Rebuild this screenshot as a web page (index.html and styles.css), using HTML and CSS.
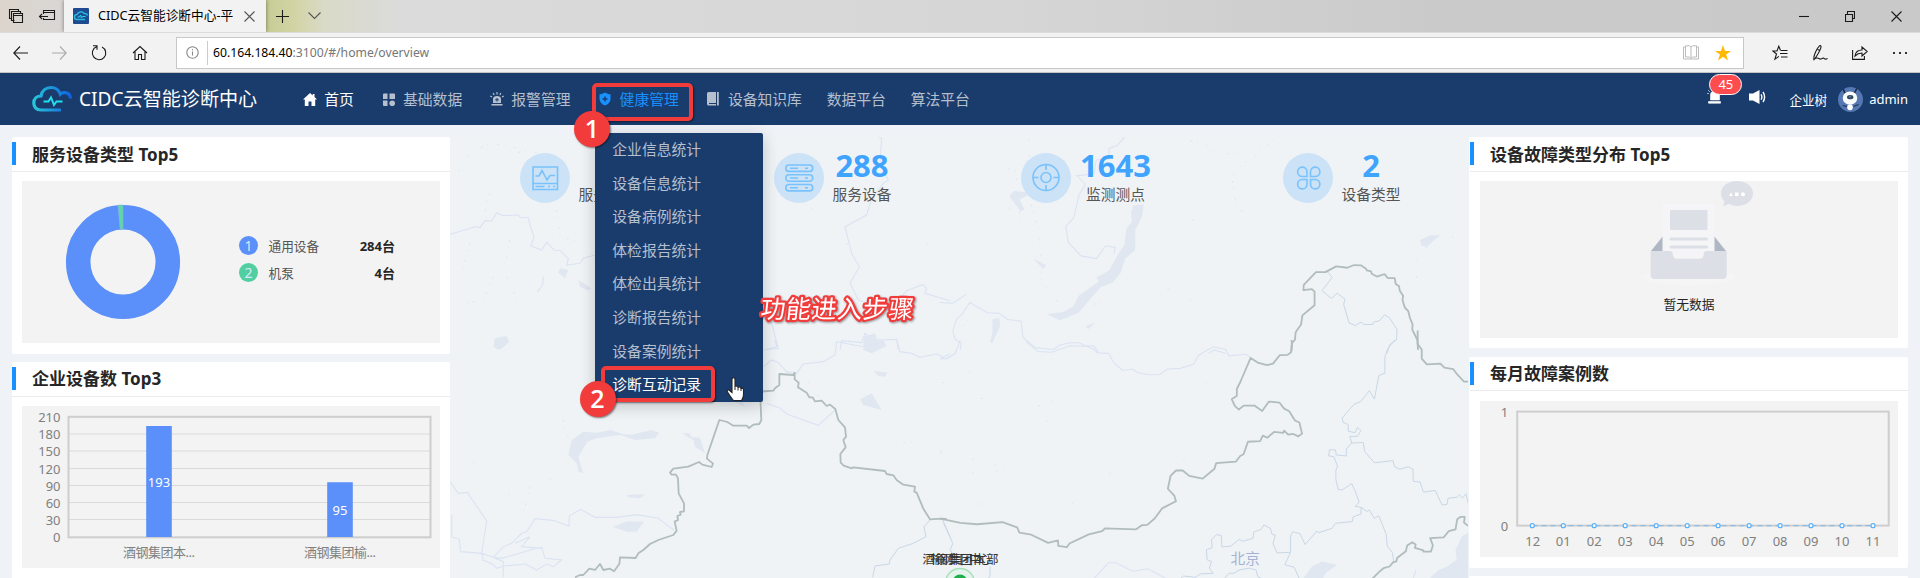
FILE: index.html
```html
<!DOCTYPE html>
<html lang="zh-CN">
<head>
<meta charset="utf-8">
<title>CIDC云智能诊断中心-平台</title>
<link rel="stylesheet" href="styles.css">
</head>
<body>
<header class="tabstrip">
  <div class="tab-tools">
    <svg width="16" height="16" viewBox="0 0 16 16" class="ln"><path d="M3.500 10.500h-2v-9h9v2M6.500 12.500h-3v-9h9v2M5.500 5.500h9v9h-9zM5.500 7.500h9"/></svg>
    <svg width="18" height="16" viewBox="0 0 18 16" class="ln"><path d="M5.500 6V2.500h11v9h-11V10M5.500 4.500h11M10 8.500H1.500M4 6L1.500 8.500 4 11"/></svg>
  </div>
  <div class="tab">
    <svg class="favicon" width="16" height="16" viewBox="0 0 16 16"><rect width="16" height="16" rx="1" fill="#1e4a90"/><path d="M12 11.500H4a2.500 2.500 0 0 1 0-5 4 4 0 0 1 7-1q3-.5 3.500 2" fill="none" stroke="#25b8dc" stroke-width="1.500"/><path d="M4.500 9h2l1-2 1 3 1-1.500h3" fill="none" stroke="#25e0e8"/></svg>
    <span class="tab-title">CIDC云智能诊断中心-平</span>
    <svg width="11" height="11" viewBox="0 0 11 11" class="ln thin"><path d="M.5.5l10 10M10.500.5l-10 10"/></svg>
  </div>
  <div class="tab-new">
    <svg width="13" height="13" viewBox="0 0 13 13" class="ln"><path d="M6.500 0v13M0 6.500h13"/></svg>
    <svg width="13" height="8" viewBox="0 0 13 8" class="ln thin"><path d="M.5.5l6 6 6-6"/></svg>
  </div>
  <div class="window-buttons">
    <svg width="10" height="11" viewBox="0 0 10 11" class="ln"><path d="M0 5.500h10"/></svg>
    <svg width="10" height="11" viewBox="0 0 10 11" class="ln"><path d="M.5 3.500h7v7h-7zM2.500 3V.5h7v7H8"/></svg>
    <svg width="11" height="11" viewBox="0 0 11 11" class="ln"><path d="M.5.5l10 10M10.500.5l-10 10"/></svg>
  </div>
</header>

<div class="addressbar">
  <div class="nav-buttons">
    <svg width="15" height="14" viewBox="0 0 15 14" class="ln"><path d="M15 7H.8M7 .5L.8 7 7 13.500"/></svg>
    <svg width="15" height="14" viewBox="0 0 15 14" class="ln faded"><path d="M0 7h14.200M8 .5L14.200 7 8 13.500"/></svg>
    <svg width="16" height="16" viewBox="0 0 16 16" class="ln"><path d="M5.500 1.800a6.700 6.700 0 1 0 5.500.2M2 .8h4v4"/></svg>
    <svg width="16" height="16" viewBox="0 0 16 16" class="ln"><path d="M1 8l7-6.500L15 8M3 6.500v8h3.500v-5h3v5H13v-8"/></svg>
  </div>
  <div class="urlbox">
    <svg width="13" height="13" viewBox="0 0 13 13" class="ln grey"><circle cx="6.500" cy="6.500" r="5.700"/><path d="M6.500 5.500v4M6.500 3v1.200"/></svg>
    <span class="url"><b>60.164.184.40</b>:3100/#/home/overview</span>
    <svg class="reader" width="16" height="15" viewBox="0 0 16 15"><path d="M2.500 2H.5v12h15V2h-2M2.500.8h4L8 2l1.500-1.200h4V12h-4L8 13.500 6.500 12h-4zM8 2v11" fill="none" stroke="#bbb"/></svg>
    <svg width="16" height="16" viewBox="0 0 16 16"><path d="M8 0l2 5.900h6l-4.900 3.600L13 15.500l-5-3.700-5 3.700 1.900-6L0 5.900h6z" fill="#ffb900"/></svg>
  </div>
  <div class="tool-buttons">
    <svg width="16" height="16" viewBox="0 0 16 16" class="ln"><path d="M8.500 5.500L6.800 1.200 5 6H.8l3.700 3-1.600 5.200 4-2.800M9 5.500h6.500M8 8.500h7.500M9 12h6.500"/></svg>
    <svg width="16" height="16" viewBox="0 0 16 16" class="ln"><path d="M2 15C1 11 5 3 7.500.8c3-1 1.500 4-5 13.500M5.500 4.500l2.500 1M1.500 15.300c2-3 4.500-2.500 6-1.500 2 1.300 2.500-1.500 4.500-.5 1 1 2 1.500 3.500 0"/></svg>
    <svg width="16" height="16" viewBox="0 0 16 16" class="ln"><path d="M.6 5v9.400h11.800V11M3 11c.5-4 3.500-6 7-6V2l5.200 4.500L10 11V8C7 8 5 9 3 11z"/></svg>
    <svg width="16" height="4" viewBox="0 0 16 4"><path d="M1 1h2v2H1zM7 1h2v2H7zM13 1h2v2h-2z" fill="#333"/></svg>
  </div>
</div>

<nav class="topnav">
  <div class="brand">
    <svg width="41" height="28" viewBox="0 0 41 28"><defs><linearGradient id="lg"><stop offset="0" stop-color="#28c6d8"/><stop offset="1" stop-color="#1062e0"/></linearGradient></defs><path d="M29 25H9C4 25 1.800 21.500 1.800 18c0-4 3-7 7.200-7 1-5.500 5-8.500 10-8.500 4.500 0 7.800 2.500 9.300 6.500 1-1 2.500-1.600 5-1.400 3.700.3 5 2.500 5.200 5.900" fill="none" stroke="url(#lg)" stroke-width="3.200"/><path d="M11.500 16.500h5l2.500-4 3 7.500 2.500-3.500h6" fill="none" stroke="#22dff0" stroke-width="2"/></svg>
    <span>CIDC云智能诊断中心</span>
  </div>
  <ul class="menu">
    <li class="on"><svg width="14" height="13" viewBox="0 0 14 13"><path d="M7 0L0 6.500h1.800V13h3.700V8.500h3V13h3.700V6.500H14L11.500 4V1H9.700v1.500z" fill="currentColor"/></svg>首页</li>
    <li><svg width="14" height="13" viewBox="0 0 14 13"><path d="M1 1.500q0-1 1-1h3.500v5.500H1zM7.500.5H12q1 0 1 1V6H7.500zM1 7.500h4.500V13H2q-1 0-1-1z" fill="currentColor"/><circle cx="10.200" cy="10.200" r="2.800" fill="currentColor"/></svg>基础数据</li>
    <li><svg width="14" height="14" viewBox="0 0 14 14"><path d="M3 11V7q0-3 4-3t4 3v4zM1.500 12h11v1.500h-11z" fill="currentColor"/><path d="M7 0v2.500M3.200 1l1 2M10.800 1l-1 2M.3 4l1.700 1M13.700 4L12 5" stroke="currentColor" stroke-width="1.200"/><path d="M7 6v3.500M5.200 7.800h3.600" stroke="#1a3c6c"/></svg>报警管理</li>
    <li class="active"><svg width="14" height="14" viewBox="0 0 14 14"><path d="M7 .5c2 1.200 3.500 1.700 5.500 1.800V7c0 3-2.500 5.300-5.500 6.500C4 12.300 1.500 10 1.500 7V2.300C3.500 2.200 5 1.700 7 .5z" fill="currentColor"/><path d="M7 4.500v5M4.500 7h5" stroke="#1a3c6c" stroke-width="1.500"/></svg>健康管理
      <div class="dropdown">
        <a>企业信息统计</a><a>设备信息统计</a><a>设备病例统计</a><a>体检报告统计</a><a>体检出具统计</a><a>诊断报告统计</a><a>设备案例统计</a><a class="on">诊断互动记录</a>
      </div>
    </li>
    <li><svg width="14" height="14" viewBox="0 0 14 14"><path d="M2.500 0H10v11H3v1h7v1.500H2.500Q1 13.500 1 12V1.500Q1 0 2.500 0zM11 0h1.800v13.500H11z" fill="currentColor"/></svg>设备知识库</li>
    <li class="plain">数据平台</li>
    <li class="plain">算法平台</li>
  </ul>
  <div class="user">
    <span class="alarm"><svg width="15" height="16" viewBox="0 0 15 16"><path d="M3.500 12V7q0-4 4.500-4t4.500 4v5zM1.500 13.500h12v1.700h-12zM0 5.500h2M1 2l2 2" fill="#fff" stroke="#fff" stroke-width=".6"/></svg><em>45</em></span>
    <svg class="speaker" width="17" height="14" viewBox="0 0 17 14"><path d="M0 3.500h4L10.500 0v14L4 10.500H0z" fill="#fff"/><path d="M12 4.300q1.800 2.700 0 5.400M14 2q3.200 5 0 10" fill="none" stroke="#fff" stroke-width="1.400"/></svg>
    <span class="tree">企业树</span>
    <svg class="avatar" width="25" height="25" viewBox="0 0 25 25"><circle cx="12.500" cy="12.500" r="12.500" fill="#5577b3"/><path d="M5.500 2.500l1.500 4M18.500 2l-2 4" stroke="#1d2b47" stroke-width="1.600" stroke-linecap="round"/><path d="M4.500 18.500l5 1.200M20.500 17.500l-5 2" stroke="#27375a" stroke-width="1.200"/><ellipse cx="12" cy="11" rx="7.300" ry="6.600" fill="#fafcff"/><ellipse cx="12.200" cy="10.200" rx="3.200" ry="2.100" fill="#34495f"/><circle cx="12" cy="9.800" r=".8" fill="#7d93ad"/><ellipse cx="12" cy="20.300" rx="2.800" ry="3" fill="#fff"/></svg>
    <span class="name">admin</span>
  </div>
</nav>

<main class="dash">
  <section class="col">
    <article class="card c1">
      <h2>服务设备类型 Top5</h2>
      <div class="panel donut-panel">
        <svg width="116" height="116" viewBox="-58 -58 116 116"><circle r="44.800" fill="none" stroke="#5b8ff9" stroke-width="24.500"/><path d="M-5 -56.800A57 57 0 0 1 0 -57V-32.500A32.500 32.500 0 0 0 -2.800 -32.400z" fill="#5ad8a6" stroke="#8fb0ea" stroke-width=".6"/></svg>
        <ul class="legend">
          <li><i class="blue">1</i><span>通用设备</span><b>284台</b></li>
          <li><i class="green">2</i><span>机泵</span><b>4台</b></li>
        </ul>
      </div>
    </article>
    <article class="card c2">
      <h2>企业设备数 Top3</h2>
      <div class="panel">
        <svg class="chart" width="418" height="162" viewBox="22 406 418 162">
          <path d="M68 434h363M68 451h363M68 468.500h363M68 485.500h363M68 502.500h363M68 519.500h363" stroke="#dadada"/>
          <rect x="68.500" y="416.800" width="362" height="120.500" fill="none" stroke="#cecece" stroke-width="2"/>
          <path d="M146.200 426h25.600v111h-25.600zM327.200 482.300h25.600V537h-25.600z" fill="#5b8ff9"/>
          <g text-anchor="end"><text x="60.500" y="422">210</text><text x="60.500" y="439">180</text><text x="60.500" y="456">150</text><text x="60.500" y="473.500">120</text><text x="60.500" y="490.500">90</text><text x="60.500" y="507.500">60</text><text x="60.500" y="524.500">30</text><text x="60.500" y="541.500">0</text></g>
          <g text-anchor="middle"><text x="159" y="486.500" class="w">193</text><text x="340" y="514.500" class="w">95</text><text x="159" y="556.500" textLength="72">酒钢集团本...</text><text x="340" y="556.500" textLength="72">酒钢集团榆...</text></g>
        </svg>
      </div>
    </article>
  </section>

  <section class="map">
    <svg class="mapbg" width="1018" height="441" viewBox="450 137 1018 441">
      <g transform="translate(450 120) scale(.33333)">
        <path class="riv" d="M0 343L45 330 75 320 90 323 105 302 125 303 140 278 160 287 205 285 210 292 235 293 240 315 252 350 243 378 275 390 290 367 312 390 330 392 355 415 350 435 390 430 400 415 435 405M262 515L278 495 280 470M1285 50L1295 55 1290 130 1315 180 1300 190 1265 235 1250 285 1185 320 1205 400 1228 440 1200 490 1225 540 1290 560M1350 535L1370 512 1418 494 1430 505 1425 520 1500 542M940 590L965 610 985 685 940 690M1170 690L1175 662 1235 668 1245 640 1260 650 1285 660 1340 658 1345 690"/>
        <path class="water" d="M330 445L355 450 345 475 325 458zM135 655L170 648 178 665 150 690 130 680zM385 480L425 505 415 512 390 500zM1240 650L1275 640 1285 675 1245 690z"/>
        <path class="dots" d="M25 155L60 100 110 75 165 72 200 85M205 97L245 92 300 115M120 220L105 260 110 300M320 270L330 350 400 370M180 360L160 460M1085 265l5 4M1190 370l4 6M1430 374h5M60 370l-25 90M130 470L100 540 40 550M170 470l40 90"/>
      </g>
      <g transform="translate(450 340) scale(.33333)">
        <path class="riv" d="M0 425L25 460 52 457 110 543 95 640 130 652 160 620 185 610 215 580 230 575 255 536 310 541 357 559 358 528 392 508 435 532 500 532 560 524 625 535 660 562 672 570M5 525L5 590 28 598 32 635 95 640 100 660 130 674 140 685 160 678 230 672M135 655L160 665 160 712M130 652L155 655 250 628 275 622 285 655 335 660 310 680 290 672 260 690 225 672M195 610L240 590 215 620 280 625M950 190L990 205 1010 222 1105 256 1155 210M940 80L965 60 985 68 1010 95 1040 100 1060 72 1120 65 1155 45 1160 5 1240 20M1340 0L1350 35 1385 40 1410 52 1460 42 1480 52 1500 42M975 0L980 20 950 28"/>
        <path class="prov" d="M1440 540L1422 560 1428 590 1390 610 1345 625 1320 660 1318 672 1275 678 1268 712M1478 540L1500 590"/>
        <path class="water" d="M355 345L365 300 400 275 440 278 480 270 520 283 545 284 605 270 628 278 615 295 555 300 510 285 440 295 412 305 385 350 400 400 385 395 380 370zM695 280L718 280 725 292 750 293 765 340 735 320 730 300zM488 560L530 544 582 545 560 575 530 575zM1230 178L1265 160 1295 210 1240 195zM1240 5L1300 0 1310 18 1265 40 1240 30zM1272 92L1312 98 1305 110 1285 108zM530 465L585 463 570 475 535 472zM133 0h24L150 20 140 30zM848 182l25-5 12 24z"/>
        <path class="dots" d="M340 240L345 280 360 300M70 370l10-12M298 420l8-8M240 440l-20 80M1360 310l20-5 28 8M1470 330l12 12M175 460l5 5M1105 170l-40-60"/>
      </g>
      <g transform="translate(940 120) scale(.33806)">
        <path class="riv" d="M548 48L525 75 500 85 500 115 462 118 455 160 405 165 430 190 412 220 395 290 372 315 380 362 417 402 463 410 490 372 518 377 515 395M0 540L38 542 78 515M60 680L62 660 45 650 38 625 48 590 65 575 88 540 140 570 175 572 200 590 240 595 245 640 260 660 290 685 330 687 385 668 435 670 455 678 467 690M795 690L810 680 845 690"/>
        <path class="prov" d="M1147 450L1160 466 1130 505 1158 528 1175 512 1198 530 1194 545 1210 600 1228 608 1245 598 1255 605 1280 605 1282 598 1300 594 1315 576 1330 586 1352 620 1350 650 1330 665 1322 690"/>
        <path class="water" d="M572 252L603 250 598 285 578 325 577 385 548 410 535 450 512 480 475 495 440 535 410 570 355 592 315 574 365 568 395 550 410 520 470 478 462 466 500 445 525 400 545 370 552 320 568 300 565 275zM155 590L175 585 178 610 155 660 148 655 155 630zM220 210L275 215 235 235 250 265 238 270 205 225zM275 410L315 430 305 440zM1420 355L1450 342 1480 340 1440 375 1425 372zM430 610L458 600 440 618z"/>
        <path class="dots" d="M262 55L268 100 248 130M200 145L228 150 225 180M220 210L205 270 172 262M235 270L238 310M270 250L290 320 300 410 300 480 350 540M740 62L785 70 805 100M850 100L880 95M906 122L885 145 860 170M932 108L995 50M865 180L880 270 900 268M745 295h6M740 532l2 4M672 500h10M1440 375L1400 430 1412 470M1515 345l4 2M455 545l25-5M85 590l-30 40"/>
      </g>
      <g transform="translate(940 340) scale(.33806)">
        <path class="riv" d="M60 0L45 40 20 55 0 55M255 0L280 22 335 28 355 15 385 8 412 8 430 18 455 17 470 38 500 40 512 65 540 90 570 86 585 97 620 103 650 102 672 86 710 84 750 72 765 45 808 20 845 28 855 47 905 42 919 53M450 712L498 659 520 659 570 684 615 677 680 712M1398 712l10-32"/>
        <path class="prov" d="M1345 0L1325 25 1316 50 1316 98 1298 105 1285 175 1270 150 1245 182 1225 190 1190 230 1192 243 1207 250 1208 270 1228 274 1235 258 1245 268 1235 285 1212 285 1218 305 1252 303 1256 330 1285 363 1340 357 1345 375 1360 382 1385 375 1399 382 1400 418 1420 420 1430 450 1465 445 1485 488 1500 486 1503 468 1530 465 1537 458 1545 468 1556 455 1562 482M1218 305L1202 322 1202 343 1172 340 1170 325 1152 325 1150 343 1165 345 1176 373 1171 385 1171 412 1178 443 1190 443 1218 425 1228 447 1240 480 1228 492 1246 495 1262 507 1270 503 1285 528 1298 520 1320 575 1323 610 1338 628 1342 655M1246 495L1245 515 1222 523 1220 537 1170 542 1160 557 1120 570 1115 565 1080 605 1065 573 1043 567 1037 580 1037 628 997 630 985 602 992 577 982 575 978 558 958 547 950 560 928 568 926 587 895 595 885 590 860 610 834 612 832 578 818 576 803 590 805 615 788 620 790 650 803 655 797 675 808 690 770 692 755 702 720 698 705 712M1037 628L1020 665 1048 672 1065 712M835 712L855 690 870 690 885 680 915 675 935 680 940 700 965 712M10 540L38 602 30 620 50 655M148 670L148 700 130 712"/>
        <path class="water" d="M1070 712L1100 670 1130 655 1175 665 1140 690 1130 712zM1562 570L1545 580 1525 620 1528 650 1500 670 1475 680 1440 712 1562 712z"/>
        <path class="dots" d="M85 95l12 6M5 126h16M120 173h6M290 195l10-2M330 185l8-10M315 240h10M95 352h10M160 370h20M165 388l40-5M95 395l6-4M112 485h8M785 125l3 3M720 355l15-15M390 483h4M500 396h5M0 330l12 14"/>
      </g>
      <g class="border">
        <path transform="translate(450 340) scale(.33333)" d="M375 712L390 705 400 705 418 686 435 690 450 672 460 690 480 686 492 694 508 672 510 652 557 654 565 640 580 630 600 612 625 600 670 585 680 572 674 545 684 540 682 528 692 524 690 516 702 514 702 490 686 460 684 415 678 404 665 404 660 398 670 386 715 380 747 366 757 374 785 381 789 371 771 356 772 345 808 240 832 246 850 257 890 257 897 264 910 254 928 252 934 240 930 155 970 152 975 145 988 135 988 102 1030 105 1034 98 1034 118 1046 128 1044 142 1070 158 1078 172 1088 172 1095 184 1115 182 1130 198 1140 194 1156 207 1165 240 1185 262 1188 290 1180 300 1187 322 1171 342 1172 368 1181 377 1205 385 1210 382 1305 393 1310 402 1330 406 1340 420 1360 434 1395 440 1393 455 1400 458 1420 506 1440 538 1472 536 1490 537"/>
        <path transform="translate(940 340) scale(.33806)" d="M0 529L15 531 60 541 110 545 185 539 228 554 235 570 270 576 320 600 349 593 350 609 375 613 383 602 440 575 480 565 488 557 580 560 597 548 613 547 635 528 657 498 698 477 693 460 674 440 682 402 698 386 718 386 737 402 777 410 812 381 817 364 875 360 888 343 898 338 911 301 947 299 955 283 968 289 988 272 1015 275 1018 268 1030 280 1045 278 1060 285 1071 277 1063 244 1050 238 1033 211 1018 203 1004 185 973 182 953 210 930 194 898 194 884 206 872 195 863 175 878 165 878 145 888 125 919 53 942 68 968 74 985 70 1005 45 1028 44 1038 37 1041 15 1040 0"/>
        <path transform="translate(940 120) scale(.33806)" d="M1040 665L1040 682 1041 660 1050 650 1052 628 1068 605 1072 578 1108 548 1108 508 1100 500 1075 503 1076 488 1112 450 1140 450 1172 433 1205 437 1225 429 1245 430 1260 440 1263 445 1275 448 1277 455 1292 463 1315 456 1325 468 1345 468 1348 485 1358 492 1360 505 1370 520 1368 532 1375 555 1385 565 1390 585 1398 605 1397 620 1412 650 1414 680"/>
        <path transform="translate(940 340) scale(.33806)" d="M1413 -28V12L1425 28 1425 55 1440 72 1480 70 1492 82 1518 86 1530 102 1550 123 1562 123M1277 708L1300 685 1312 675 1330 670 1340 658 1350 655 1352 645 1378 625 1382 608 1397 598 1407 605 1405 615 1430 622 1430 626 1452 626 1458 608 1450 586 1490 584 1505 565 1525 560 1530 530 1540 523 1552 523 1550 540 1562 550"/>
      </g>
      <circle cx="960" cy="583" r="14.500" fill="#e4f4ec" stroke="#a5e0b8" stroke-width="1.500"/><circle cx="960" cy="582" r="7.500" fill="#1fae4c"/>
      <text x="1230.500" y="563.500" class="city">北京</text>
      <text x="922.500" y="564" textLength="76" class="pin">酒钢集团本部</text><text x="931" y="564" textLength="60" class="pin">榆钢集团中心</text>
    </svg>
    <div class="stats">
      <div class="stat"><svg width="50" height="50" viewBox="0 0 50 50"><circle cx="25" cy="25" r="25"/><path d="M13 14h24.500v22.500H13zM13 30.500h24.500M15.500 23h3.500l3-5.500 5 9.500 3-4.500h5M15.500 33.500h9M28 33.500h2M33 33.500h2"/></svg><div><strong>&nbsp;</strong><span>服务企业</span></div></div>
      <div class="stat"><svg width="50" height="50" viewBox="0 0 50 50"><circle cx="25" cy="25" r="25"/><path d="M15 12h20.500a3.200 3.200 0 0 1 0 6.400H15a3.200 3.200 0 0 1 0-6.400zM15 21.800h20.500a3.200 3.200 0 0 1 0 6.400H15a3.200 3.200 0 0 1 0-6.400zM15 31.500h20.500a3.200 3.200 0 0 1 0 6.400H15a3.200 3.200 0 0 1 0-6.400zM16 15.200h8M31 15.200h3M16 25h8M31 25h3M16 34.700h8M31 34.700h3"/></svg><div><strong>288</strong><span>服务设备</span></div></div>
      <div class="stat"><svg width="50" height="50" viewBox="0 0 50 50"><circle cx="25" cy="25" r="25"/><path d="M38 24.500a13 13 0 1 1-26 0 13 13 0 0 1 26 0zM30 24.500a5 5 0 1 1-10 0 5 5 0 0 1 10 0zM25 11.500V17M25 32v5.500M12 24.500h5.500M32.500 24.500H38"/></svg><div class="wide"><strong>1643</strong><span>监测测点</span></div></div>
      <div class="stat"><svg width="50" height="50" viewBox="0 0 50 50"><circle cx="25" cy="25" r="25"/><path d="M24 23.500v-5a4.700 4.700 0 1 0-4.700 5zM27.500 23.500v-5a4.700 4.700 0 1 1 4.700 5zM24 26.500v5a4.700 4.700 0 1 1-4.700-5zM27.500 26.500v5a4.700 4.700 0 1 0 4.700-5z"/></svg><div><strong>2</strong><span>设备类型</span></div></div>
    </div>
  </section>

  <section class="col right">
    <article class="card c3">
      <h2>设备故障类型分布 Top5</h2>
      <div class="panel empty">
        <svg width="116" height="106" viewBox="0 0 116 106"><path d="M77 0c9 0 16 5 16 12.500S86 25 77 25q-4 0-8-2l-6 2.200 1.500-5q-3.500-3-3.500-7.700C61 5 68 0 77 0z" fill="#dcdfe6" transform="translate(17 0)"/><path d="M86 15l2-3.500 2 3.500zM92 11.500h3.500V15H92z" fill="#fff"/><circle cx="100" cy="13.200" r="2" fill="#fff"/><ellipse cx="45.500" cy="96" rx="46" ry="8" fill="#f5f5f6"/><path d="M8 70l12-15v15zM83 70L71 55v15z" fill="#aeb7c3"/><path d="M19.500 23h52v60h-52z" fill="#f5f5f7"/><rect x="27" y="29" width="37.500" height="20" rx="1" fill="#dcdfe6"/><path d="M28 58h35.500M28 66h35.500" stroke="#dcdfe6" stroke-width="3" stroke-linecap="round"/><path d="M7.700 70h19q3 0 3 3 .5 4.800 4 4.800h23q4 0 4-4.800 0-3 3-3h20v24q0 4-4 4h-68q-4 0-4-4z" fill="#dcdfe6"/></svg>
        <p>暂无数据</p>
      </div>
    </article>
    <article class="card c4">
      <h2>每月故障案例数</h2>
      <div class="panel">
        <svg class="chart" width="418" height="156" viewBox="1480 401 418 156">
          <rect x="1517.200" y="411.600" width="371.500" height="114" fill="none" stroke="#cecece" stroke-width="2"/>
          <path d="M1532.500 525.700h340.500" stroke="#7ab8ee" stroke-width="1" stroke-dasharray="5 4"/>
          <g fill="#fff" stroke="#5bb0fa" stroke-width="1.200"><circle cx="1532.300" cy="525.700" r="2"/><circle cx="1563.300" cy="525.700" r="2"/><circle cx="1594.200" cy="525.700" r="2"/><circle cx="1625.200" cy="525.700" r="2"/><circle cx="1656.200" cy="525.700" r="2"/><circle cx="1687.200" cy="525.700" r="2"/><circle cx="1718.100" cy="525.700" r="2"/><circle cx="1749.100" cy="525.700" r="2"/><circle cx="1780.100" cy="525.700" r="2"/><circle cx="1811" cy="525.700" r="2"/><circle cx="1842" cy="525.700" r="2"/><circle cx="1873" cy="525.700" r="2"/></g>
          <g text-anchor="middle"><text x="1504.500" y="416.500">1</text><text x="1504.500" y="530.500">0</text><text x="1532.700" y="545.500">12</text><text x="1563.300" y="545.500">01</text><text x="1594.200" y="545.500">02</text><text x="1625.200" y="545.500">03</text><text x="1656.200" y="545.500">04</text><text x="1687.200" y="545.500">05</text><text x="1718.100" y="545.500">06</text><text x="1749.100" y="545.500">07</text><text x="1780.100" y="545.500">08</text><text x="1811" y="545.500">09</text><text x="1842" y="545.500">10</text><text x="1873" y="545.500">11</text></g>
        </svg>
      </div>
    </article>
    <article class="card c5"></article>
  </section>
</main>

<div class="box box-1"></div><div class="step step-1">1</div>
<div class="box box-2"></div><div class="step step-2">2</div>
<svg class="note" width="170" height="44" viewBox="0 0 170 44"><text x="7" y="32" textLength="153" transform="translate(4 0) skewX(-6)">功能进入步骤</text></svg>
<svg class="hand" width="19" height="25" viewBox="0 0 19 25"><path d="M6 2.500q0-1.700 1.500-1.700T9 2.500V9q3.500 0 3.500 1.300Q15 9.500 15 11.500q2.500-.5 2.500 1.500v4.500q0 3-2 6h-8Q4.500 20 1.200 14.500q-.3-2 1.800-1.500l3 2.500z" fill="#fff" stroke="#222" stroke-width="1.100"/><path d="M9 9v4M12 10v3.500M15 11.500v2.500" stroke="#222"/></svg>
</body>
</html>
```
FILE: styles.css
```css
* { box-sizing: border-box; }
body {
  margin: 0;
  height: 578px;
  overflow: hidden;
  position: relative;
  background: #eff2f6;
  font-family: "Noto Sans", "Noto Sans CJK SC", sans-serif;
  color: #444;
}
ul { margin: 0; padding: 0; list-style: none; }
svg { flex: none; display: block; }
.ln { fill: none; stroke: #1a1a1a; stroke-width: 1.1; }
.ln.thin { stroke: #555; }
.ln.faded { stroke: #aaa; }
.ln.grey { stroke: #888; }

/* browser chrome */
.tabstrip {
  height: 32px;
  display: flex;
  align-items: center;
  background: linear-gradient(90deg, #dcd5cd 0, #d9d6d4 60px, #c6cc96 266px, #d3d4a5 295px, #d9dac8 325px, #dbdbdb 400px, #d6d6d6 1000px, #cacaca 1450px, #c9c9c9);
}
.tab-tools { width: 64px; display: flex; gap: 14px; padding-left: 8px; }
.tab {
  width: 202px;
  height: 32px;
  display: flex;
  align-items: center;
  padding-left: 9px;
  background: #f2f2f2;
  box-shadow: 0 0 4px rgba(0, 0, 0, .45);
  clip-path: inset(0 -5px 0 -5px);
}
.tab-title {
  width: 136px;
  margin: 0 10px 3px 9px;
  overflow: hidden;
  white-space: nowrap;
  font-size: 12.700px;
  line-height: 20px;
  color: #000;
}
.tab-new { display: flex; align-items: center; gap: 19px; padding-left: 10px; }
.window-buttons { margin-left: auto; display: flex; gap: 36px; padding-right: 18px; }
.addressbar {
  height: 41px;
  display: flex;
  align-items: center;
  background: #f2f2f2;
  border-top: 1px solid #dcdcdc;
  border-bottom: 1px solid #c4c4c4;
}
.nav-buttons { width: 176px; display: flex; align-items: center; gap: 24.200px; padding-left: 13px; }
.urlbox {
  width: 1568px;
  height: 32px;
  display: flex;
  align-items: center;
  padding: 0 12px 0 9px;
  background: #fff;
  border: 1px solid #c8c8c8;
}
.url {
  margin-left: 8px;
  padding-left: 5px;
  border-left: 1px solid #ccc;
  font-size: 12.200px;
  line-height: 24px;
  color: #767676;
}
.url b { font-weight: 400; color: #000; }
.reader { margin: 0 16px 0 auto; }
.tool-buttons { display: flex; align-items: center; gap: 24px; margin-left: 28px; }

/* application header */
.topnav {
  height: 52px;
  display: flex;
  align-items: center;
  background: #1a3c6c;
  color: #b5bfce;
  position: relative;
  z-index: 2;
}
.brand { width: 300px; padding-left: 32px; display: flex; align-items: center; gap: 6px; color: #fff; }
.brand span { font-size: 19.100px; line-height: 28px; }
.menu { display: flex; gap: 24.800px; font-size: 14.800px; line-height: 52px; }
.menu li { display: flex; align-items: center; position: relative; white-space: nowrap; }
.menu li > svg { margin: 0 7.500px 0 2.800px; }
.menu .on { color: #fff; }
.menu .active { color: #1890ff; }
.dropdown {
  position: absolute;
  left: 0;
  top: 60px;
  width: 168px;
  height: 269px;
  border-radius: 2px;
  background: #1a3c6c;
  color: #b5bfce;
  font-size: 14.800px;
  box-shadow: 0 4px 16px rgba(0, 0, 0, .2);
}
.dropdown a { display: block; height: 33.600px; line-height: 33.600px; padding-left: 17px; }
.user { margin-left: auto; display: flex; align-items: center; padding-right: 12px; color: #fff; }
.alarm { position: relative; margin-right: 27px; }
.alarm svg { margin-top: -6px; }
.alarm em {
  position: absolute;
  left: 2px;
  top: -20.500px;
  width: 33px;
  height: 21px;
  border: 1px solid #fff;
  border-radius: 11px;
  background: #ff4d4f;
  font: 13px/19px "Noto Sans", sans-serif;
  text-align: center;
}
.speaker { margin: -5px 23px 0 0; }
.tree { font-size: 12.600px; margin-right: 11px; }
.name { font-size: 13px; margin-left: 6px; }

/* dashboard */
.dash { display: grid; grid-template-columns: 438px 1018px 440px; padding: 12px 0 0 12px; height: 453px; overflow: hidden; }
.card { position: relative; background: #fff; border-radius: 2px; overflow: hidden; }
.card h2 {
  margin: 0;
  height: 35px;
  padding: 5px 0 6px;
  border-bottom: 1px solid #ebebeb;
  font-size: 17px;
  line-height: 24px;
  font-weight: 700;
  color: #262626;
  white-space: nowrap;
  display: flex;
  align-items: center;
}
.card h2::before { content: ""; width: 4px; height: 23px; margin-right: 16px; background: #1890ff; }
.panel { margin: 9px 10px 0; background: #f3f3f3; }
.c1 { height: 217px; margin-bottom: 8px; }
.c1 h2, .c3 h2 { line-height: 26px; padding: 6px 0 5px; }
.c1 h2::before, .c3 h2::before { margin-top: -2px; }
.c2 { height: 240px; }
.c1 .panel, .c2 .panel { height: 162px; }
.right { padding-left: 2px; }
.c3, .c4 { height: 211px; }
.c3 .panel { height: 157px; }
.c4 .panel { height: 156px; margin-top: 10px; }
.c4 h2 { height: 34px; padding-bottom: 5px; }
.c3 { margin-bottom: 9px; }
.c4 { margin-bottom: 8px; }
.c5 { height: 20px; }
.right .card { box-shadow: -1px 0 #fff; }
.donut-panel { display: flex; align-items: center; padding-left: 43px; }
.legend { width: 156px; margin: -6px 0 0 58px; font-size: 12.700px; color: #555; }
.legend li { display: flex; align-items: center; height: 26.500px; }
.legend i {
  width: 19px;
  height: 19px;
  margin-right: 10.500px;
  border-radius: 50%;
  font-size: 14px;
  font-style: normal;
  line-height: 19px;
  text-align: center;
  color: #d8e8ff;
}
.legend .blue { background: #5b8ff9; }
.legend .green { background: #52cfa0; }
.legend b { margin-left: auto; font-size: 13px; color: #262626; }
.chart text { font-size: 13px; fill: #808080; }
.chart .w { fill: #fff; font-size: 13px; }
.empty { display: flex; flex-direction: column; align-items: center; }
.empty svg { margin-left: 24px; }
.empty p { margin: 7px 0 0; font-size: 12.800px; line-height: 20px; color: #262626; }

.map { position: relative; background: #eff3f6; }
.mapbg { position: absolute; inset: 0; }
.mapbg path { vector-effect: non-scaling-stroke; }
.riv { fill: none; stroke: #dbe3f2; stroke-width: 1.1; }
.prov { fill: none; stroke: #c9d7e6; stroke-width: 1; }
.water { fill: #e1e7f1; }
.dots { fill: none; stroke: #dfe6ef; stroke-width: 1; stroke-dasharray: 2 5 1 9; }
.border path { fill: none; stroke: #b1bcbd; stroke-width: 1.8; stroke-linejoin: round; }
.city { font-size: 14.700px; fill: #a4b3d4; }
.pin { font-size: 12.500px; fill: #333; }
.stats { position: relative; display: grid; grid-template-columns: 254px 247px 262px auto; padding: 14px 0 0 70px; }
.stat { display: flex; gap: 8px; }
.stat svg { margin-top: 2px; }
.stat circle { fill: #cbe2f7; }
.stat path { fill: none; stroke: #79c2fc; stroke-width: 1.6; }
.stat div { display: flex; flex-direction: column; align-items: center; min-width: 60px; }
.stat .wide { margin-left: 1px; }
.stat strong { font-size: 31px; line-height: 32px; margin-top: -2px; color: #40a4ff; }
.stat span { font-size: 14.700px; line-height: 22px; color: #555; margin-top: 2px; }

/* walkthrough annotations */
.box { position: absolute; z-index: 3; border: 4px solid #f23c3c; border-radius: 5px; box-shadow: 1px 1px 2px rgba(0, 0, 0, .5); }
.box-1 { left: 592px; top: 83px; width: 101px; height: 38px; }
.box-2 { left: 601px; top: 366px; width: 114px; height: 36px; }
.step {
  position: absolute;
  z-index: 4;
  width: 36px;
  height: 36px;
  border-radius: 50%;
  background: #f23c3c;
  box-shadow: 1px 1px 2px rgba(0, 0, 0, .5);
  font: 600 25px/35px "Open Sans", "Noto Sans", sans-serif;
  color: #fff;
  text-align: center;
}
.step-1 { left: 574px; top: 111px; }
.step-2 { left: 579.500px; top: 381px; }
.note { position: absolute; z-index: 4; left: 752px; top: 286px; filter: drop-shadow(1px 1px 1px rgba(0, 0, 0, .4)); }
.note text { font-size: 25px; font-weight: 400; fill: #fff; stroke: #f23c3c; stroke-width: 4.500px; stroke-linejoin: round; paint-order: stroke; }
.hand { position: absolute; z-index: 4; left: 726px; top: 377px; }
```
